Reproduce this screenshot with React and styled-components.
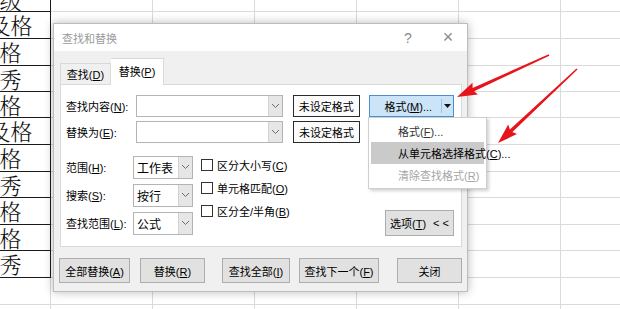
import React from 'react'
import styled, { createGlobalStyle } from 'styled-components'

const GlobalStyle = createGlobalStyle`
  body {
    margin: 0;
    overflow: hidden;
    background: #fff;
    font-family: "Liberation Sans", "Noto Sans CJK SC", sans-serif;
  }
`

const Screen = styled.div`
  position: relative;
  width: 620px;
  height: 309px;
  overflow: hidden;
`

/* ---------- spreadsheet behind the dialog ---------- */

const Sheet = styled.div`
  display: grid;
  grid-template-columns: repeat(7, 102px);
  grid-template-rows: ${p => p.$rows.map(r => r + 'px').join(' ')};
  margin-left: -51px;
`

const Cell = styled.div`
  box-sizing: border-box;
  border-right: 1px solid ${p => (p.$bold ? '#1a1a1a' : '#dadada')};
  border-bottom: 1px solid ${p => (p.$bold ? '#1a1a1a' : '#dadada')};
  display: flex;
  justify-content: center;
  align-items: ${p => (p.$clip ? 'flex-end' : 'center')};
  overflow: hidden;
  font-family: "Noto Serif CJK SC", "Noto Sans CJK SC", serif;
  font-size: 22px;
  font-weight: 300;
  line-height: 1;
  color: #111;
`

/* ---------- dialog ---------- */

const Dialog = styled.div`
  position: absolute;
  left: 53px;
  top: 23px;
  width: 415px;
  height: 269px;
  box-sizing: border-box;
  border: 1px solid #bdbdbd;
  background: #f0f0f0;
  box-shadow: 0 0 9px rgba(0, 0, 0, 0.28);
  display: flex;
  flex-direction: column;
  font-size: 11px;
  color: #000;
`

const TitleBar = styled.div`
  height: 27px;
  background: #fff;
  display: flex;
  align-items: center;
  padding-left: 8px;
  color: #9b9b9b;
`

const TitleText = styled.div`
  flex: 1;
`

const TitleGlyph = styled.div`
  width: 14px;
  text-align: center;
  font-size: ${p => p.$size}px;
  margin-right: ${p => p.$gap}px;
  color: #8a8a8a;
`

const Body = styled.div`
  flex: 1;
  display: flex;
  flex-direction: column;
  padding: 7px 5px 0 6px;
`

const TabStrip = styled.div`
  display: flex;
  align-items: flex-end;
  height: 27px;
  margin-bottom: -1px;
  position: relative;
  z-index: 1;
`

const Tab = styled.div`
  box-sizing: border-box;
  width: ${p => p.$w}px;
  height: ${p => (p.$active ? 27 : 22)}px;
  border: 1px solid #d9d9d9;
  border-bottom: ${p => (p.$active ? 'none' : '1px solid #d9d9d9')};
  border-left: ${p => (p.$active ? 'none' : '1px solid #d9d9d9')};
  background: ${p => (p.$active ? '#fff' : '#f0f0f0')};
  display: flex;
  align-items: center;
  justify-content: center;
  padding-bottom: ${p => (p.$active ? 2 : 0)}px;
`

const Panel = styled.div`
  box-sizing: border-box;
  height: 163px;
  background: #fff;
  border: 1px solid #d9d9d9;
  padding: 10px 7px 10px 5px;
  display: flex;
  flex-direction: column;
`

const FieldRow = styled.div`
  display: flex;
  align-items: center;
  height: 22px;
  margin-top: ${p => p.$mt || 0}px;
`

const Label = styled.div`
  width: ${p => p.$w}px;
  flex-shrink: 0;
  white-space: nowrap;
`

const Combo = styled.div`
  box-sizing: border-box;
  width: ${p => p.$w}px;
  height: ${p => p.$h}px;
  border: 1px solid #b4b4b4;
  background: #fff;
  display: flex;
  align-items: stretch;
  flex-shrink: 0;
`

const ComboText = styled.div`
  flex: 1;
  padding-left: 3px;
  display: flex;
  align-items: center;
  font-size: 12px;
`

const ComboArrow = styled.div`
  width: 13px;
  background: #e6e6e6;
  border-left: 1px solid #d2d2d2;
  display: flex;
  align-items: center;
  justify-content: center;
`

const FormatButton = styled.div`
  box-sizing: border-box;
  width: 67px;
  height: 22px;
  margin-left: ${p => p.$ml}px;
  border: 1px solid #2b2b2b;
  background: #fbfbfb;
  display: flex;
  align-items: center;
  justify-content: center;
`

const SplitButton = styled.div`
  box-sizing: border-box;
  width: 86px;
  height: 22px;
  margin-left: 9px;
  border: 1px solid #4a90d0;
  background: #cce4f7;
  display: flex;
  align-items: stretch;
`

const SplitMain = styled.div`
  flex: 1;
  display: flex;
  align-items: center;
  justify-content: center;
  padding-left: 6px;
  border-right: 1px solid #9ec3e4;
  margin: 3px 0;
`

const SplitCaret = styled.div`
  width: 11px;
  display: flex;
  align-items: center;
  justify-content: center;
`

const Options = styled.div`
  display: flex;
  margin-top: 13px;
  flex: 1;
`

const SelectColumn = styled.div`
  display: flex;
  flex-direction: column;
  gap: 5px;
`

const CheckColumn = styled.div`
  display: flex;
  flex-direction: column;
  gap: 9px;
  margin-left: 8px;
  padding-top: 2px;
`

const CheckRow = styled.label`
  display: flex;
  align-items: center;
  height: 14px;
  gap: 4px;
`

const Box = styled.span`
  box-sizing: border-box;
  width: 12px;
  height: 12px;
  border: 1px solid #333;
  background: #fff;
`

const PushButton = styled.div`
  box-sizing: border-box;
  width: ${p => p.$w}px;
  height: ${p => p.$h || 25}px;
  margin-left: ${p => p.$ml || 0}px;
  border: 1px solid #adadad;
  background: #e1e1e1;
  display: flex;
  align-items: center;
  justify-content: center;
  white-space: nowrap;
`

const OptionsButton = styled(PushButton)`
  margin-left: auto;
  align-self: flex-end;
  gap: 7px;
`

const ButtonRow = styled.div`
  display: flex;
  margin: 11px 0 0 -1px;
`

/* ---------- dropdown menu over the dialog ---------- */

const Menu = styled.div`
  position: absolute;
  left: 368px;
  top: 117px;
  width: 119px;
  box-sizing: border-box;
  padding: 2px;
  background: #fff;
  border: 1px solid #cfcfcf;
  box-shadow: 2px 2px 3px rgba(0, 0, 0, 0.18);
  font-size: 11px;
`

const MenuItem = styled.div`
  height: 22px;
  display: flex;
  align-items: center;
  padding-left: 27px;
  white-space: nowrap;
  background: ${p => (p.$hot ? '#cacaca' : 'transparent')};
  color: ${p => (p.$disabled ? '#a6a6a6' : p.$hot ? '#000' : '#333')};
`

const Overlay = styled.svg`
  position: absolute;
  left: 0;
  top: 0;
  pointer-events: none;
`

const rows = [12, 27, 27, 26, 26, 27, 27, 26, 27, 26, 27, 27, 27]
const grades = ['等级', '不及格', '合格', '优秀', '合格', '不及格', '合格', '优秀', '合格', '合格', '优秀']

function Chevron() {
  return (
    <svg width="9" height="6" viewBox="0 0 9 6">
      <polyline points="1,1 4.5,4.5 8,1" fill="none" stroke="#6d6d6d" strokeWidth="1" />
    </svg>
  )
}

function Select({ w, h, children }) {
  return (
    <Combo $w={w} $h={h}>
      <ComboText>{children}</ComboText>
      <ComboArrow><Chevron /></ComboArrow>
    </Combo>
  )
}

function arrow(x1, y1, x2, y2) {
  const len = Math.hypot(x2 - x1, y2 - y1)
  const ux = (x2 - x1) / len
  const uy = (y2 - y1) / len
  const nx = -uy
  const ny = ux
  const head = 18
  const bx = x2 - ux * head
  const by = y2 - uy * head
  const p = (x, y, k) => `${(x + nx * k).toFixed(1)},${(y + ny * k).toFixed(1)}`
  return [
    p(x1, y1, 0.8), p(bx, by, 1.8), p(bx - ux * 2, by - uy * 2, 6.5), `${x2},${y2}`,
    p(bx - ux * 2, by - uy * 2, -6.5), p(bx, by, -1.8), p(x1, y1, -0.8),
  ].join(' ')
}

export default function App() {
  return (
    <Screen>
      <GlobalStyle />
      <Sheet $rows={rows}>
        {rows.map((h, r) =>
          Array.from({ length: 7 }, (_, c) => (
            <Cell key={r + '-' + c} $bold={c === 0 && r < 11} $clip={r === 0}>
              {c === 0 ? grades[r] : null}
            </Cell>
          ))
        )}
      </Sheet>

      <Dialog>
        <TitleBar>
          <TitleText>查找和替换</TitleText>
          <TitleGlyph $size={14} $gap={26}>?</TitleGlyph>
          <TitleGlyph $size={18} $gap={12}>×</TitleGlyph>
        </TitleBar>
        <Body>
          <TabStrip>
            <Tab $w={51}><span>查找(<u>D</u>)</span></Tab>
            <Tab $w={53} $active><span>替换(<u>P</u>)</span></Tab>
          </TabStrip>
          <Panel>
            <FieldRow>
              <Label $w={70}>查找内容(<u>N</u>):</Label>
              <Select w={147} h={22} />
              <FormatButton $ml={10}>未设定格式</FormatButton>
              <SplitButton>
                <SplitMain><span>格式(<u>M</u>)...</span></SplitMain>
                <SplitCaret>
                  <svg width="7" height="4" viewBox="0 0 7 4"><polygon points="0,0 7,0 3.5,4" fill="#111" /></svg>
                </SplitCaret>
              </SplitButton>
            </FieldRow>
            <FieldRow $mt={4}>
              <Label $w={70}>替换为(<u>E</u>):</Label>
              <Select w={147} h={22} />
              <FormatButton $ml={10}>未设定格式</FormatButton>
            </FieldRow>
            <Options>
              <SelectColumn>
                <FieldRow>
                  <Label $w={67}>范围(<u>H</u>):</Label>
                  <Select w={60} h={23}>工作表</Select>
                </FieldRow>
                <FieldRow $mt={1}>
                  <Label $w={67}>搜索(<u>S</u>):</Label>
                  <Select w={60} h={23}>按行</Select>
                </FieldRow>
                <FieldRow $mt={1}>
                  <Label $w={67}>查找范围(<u>L</u>):</Label>
                  <Select w={60} h={23}>公式</Select>
                </FieldRow>
              </SelectColumn>
              <CheckColumn>
                <CheckRow><Box /><span>区分大小写(<u>C</u>)</span></CheckRow>
                <CheckRow><Box /><span>单元格匹配(<u>O</u>)</span></CheckRow>
                <CheckRow><Box /><span>区分全/半角(<u>B</u>)</span></CheckRow>
              </CheckColumn>
              <OptionsButton $w={69} $h={26}>
                <span>选项(<u>T</u>)</span>
                <span>&lt; &lt;</span>
              </OptionsButton>
            </Options>
          </Panel>
          <ButtonRow>
            <PushButton $w={71}><span>全部替换(<u>A</u>)</span></PushButton>
            <PushButton $w={65} $ml={10}><span>替换(<u>R</u>)</span></PushButton>
            <PushButton $w={68} $ml={17}><span>查找全部(<u>I</u>)</span></PushButton>
            <PushButton $w={80} $ml={9}><span>查找下一个(<u>F</u>)</span></PushButton>
            <PushButton $w={65} $ml={18}>关闭</PushButton>
          </ButtonRow>
        </Body>
      </Dialog>

      <Menu>
        <MenuItem><span>格式(<u>F</u>)...</span></MenuItem>
        <MenuItem $hot><span>从单元格选择格式(<u>C</u>)...</span></MenuItem>
        <MenuItem $disabled><span>清除查找格式(<u>R</u>)</span></MenuItem>
      </Menu>

      <Overlay width="620" height="309">
        <polygon points={arrow(549, 55, 457, 97)} fill="#e8141b" />
        <polygon points={arrow(577, 69, 498, 143)} fill="#e8141b" />
      </Overlay>
    </Screen>
  )
}
